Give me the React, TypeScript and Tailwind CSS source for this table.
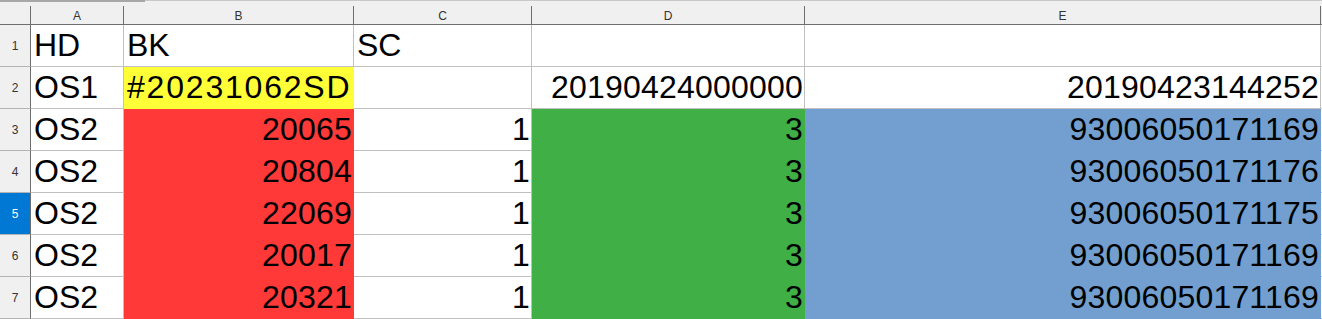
import React from "react";

type Align = "l" | "r";

interface CellDef {
  text: string;
  align: Align;
  fill: string;
  wide?: boolean;
}

// column widths include the 1px right grid line
const COLS = [
  { key: "A", w: "w-[93px]" },
  { key: "B", w: "w-[230px]" },
  { key: "C", w: "w-[178px]" },
  { key: "D", w: "w-[273px]" },
  { key: "E", w: "w-[516px]" },
];

const WHITE = "bg-white border-[#c0c0c0]";
const YELLOW = "bg-[#ffff38] border-[#ffff38]";
const RED = "bg-[#ff3838] border-[#ff3838]";
const GREEN = "bg-[#3faf46] border-[#3faf46]";
const BLUE = "bg-[#729fcf] border-[#729fcf]";

const dataRow = (b: string, e: string): CellDef[] => [
  { text: "OS2", align: "l", fill: WHITE },
  { text: b, align: "r", fill: RED },
  { text: "1", align: "r", fill: WHITE },
  { text: "3", align: "r", fill: GREEN },
  { text: e, align: "r", fill: BLUE },
];

const ROWS: CellDef[][] = [
  [
    { text: "HD", align: "l", fill: WHITE },
    { text: "BK", align: "l", fill: WHITE },
    { text: "SC", align: "l", fill: WHITE },
    { text: "", align: "l", fill: WHITE },
    { text: "", align: "l", fill: WHITE },
  ],
  [
    { text: "OS1", align: "l", fill: WHITE },
    { text: "#20231062SD", align: "l", fill: YELLOW, wide: true },
    { text: "", align: "l", fill: WHITE },
    { text: "20190424000000", align: "r", fill: WHITE },
    { text: "20190423144252", align: "r", fill: WHITE },
  ],
  dataRow("20065", "93006050171169"),
  dataRow("20804", "93006050171176"),
  dataRow("22069", "93006050171175"),
  dataRow("20017", "93006050171169"),
  dataRow("20321", "93006050171169"),
];

const SELECTED_ROW = 5;

function Cell({ w, cell }: { w: string; cell: CellDef }) {
  return (
    <div
      className={`${w} shrink-0 h-full border-r border-b ${cell.fill} flex items-center overflow-hidden whitespace-nowrap leading-[41px] ${
        cell.align === "r" ? "justify-end pr-[1px] tracking-[0.2px]" : "justify-start pl-[3px]"
      } ${cell.wide ? "tracking-[1.8px]" : ""}`}
    >
      {cell.text}
    </div>
  );
}

export default function App() {
  return (
    <div
      className="w-[1322px] h-[319px] overflow-hidden bg-white text-black"
      style={{ fontFamily: '"Liberation Sans", Arial, sans-serif' }}
    >
      {/* strip above the column headers */}
      <div className="relative h-[6px] bg-[#f0f0f0] border-t border-[#c8c8c8]">
        <div className="absolute left-0 top-[-1px] w-[145px] h-[2px] bg-[#a8a8a8]" />
      </div>

      {/* column headers */}
      <div className="flex h-[19px] bg-[#f0f0f0] border-b border-[#6e6e6e] text-[12px] text-[#333333]">
        <div className="w-[31px] shrink-0 h-full border-r border-[#6e6e6e]" />
        {COLS.map((c) => (
          <div
            key={c.key}
            className={`${c.w} shrink-0 h-full border-r border-[#6e6e6e] flex items-center justify-center pt-[1px]`}
          >
            {c.key}
          </div>
        ))}
        <div className="flex-1" />
      </div>

      {/* sheet rows */}
      {ROWS.map((row, i) => {
        const n = i + 1;
        const selected = n === SELECTED_ROW;
        return (
          <div key={n} className="flex h-[42px]">
            <div
              className={`w-[31px] shrink-0 h-full border-r border-r-[#6e6e6e] border-b border-b-[#b4b4b4] flex items-center justify-center text-[12px] ${
                selected ? "bg-[#0078d4] text-white" : "bg-[#f0f0f0] text-[#333333]"
              }`}
            >
              {n}
            </div>
            <div className="flex h-full text-[32px]">
              {row.map((cell, j) => (
                <Cell key={j} w={COLS[j].w} cell={cell} />
              ))}
            </div>
            <div className="flex-1 h-full border-b border-[#c0c0c0]" />
          </div>
        );
      })}
    </div>
  );
}
